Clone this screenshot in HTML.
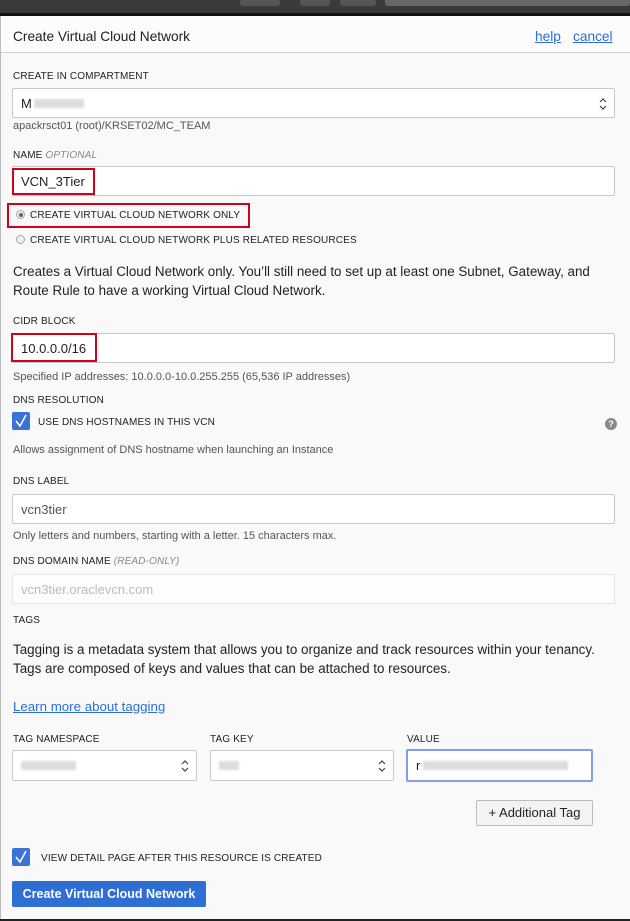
<!DOCTYPE html>
<html><head><meta charset="utf-8"><style>
*{box-sizing:border-box;margin:0;padding:0}
body{width:630px;height:921px;background:#f9f9f9;font-family:"Liberation Sans",sans-serif;color:#222;position:relative;overflow:hidden}
.a{position:absolute}
.lbl{position:absolute;left:13px;font-size:10px;letter-spacing:.15px;color:#222}
.lbl i{color:#888}
.help{position:absolute;left:13px;font-size:11px;color:#555}
.inp{position:absolute;background:#fff;border:1px solid #c8c8c8;border-radius:2px;font-size:13px;padding-left:8px;display:flex;align-items:center}
.red{position:absolute;border:2px solid #d0021b}
.p{position:absolute;left:13px;font-size:13.4px;line-height:19px;color:#222}
.arr{position:absolute;right:6px;top:8px}
.blur{display:inline-block;height:9px;background:#ddd;filter:blur(1px)}
.cb{position:absolute;width:18px;height:18px;background:#3a72d6;border-radius:2px}
</style></head><body>
<div class="a" style="left:0;top:0;width:630px;height:13px;background:#3a3a3a"></div>
<div class="a" style="left:240px;top:0;width:40px;height:6px;background:#555;border-radius:0 0 3px 3px"></div>
<div class="a" style="left:300px;top:0;width:30px;height:6px;background:#555;border-radius:0 0 3px 3px"></div>
<div class="a" style="left:340px;top:0;width:36px;height:6px;background:#555;border-radius:0 0 3px 3px"></div>
<div class="a" style="left:385px;top:0;width:245px;height:6px;background:#666;border-radius:0 0 3px 3px"></div>
<div class="a" style="left:0;top:13px;width:630px;height:3px;background:#111"></div>
<div class="a" style="left:0;top:16px;width:630px;height:37px;background:#fcfcfc;border-bottom:1px solid #ccd"></div>
<div class="a" style="left:0;top:16px;width:1px;height:905px;background:#bbb"></div>
<div class="a" style="left:13px;top:29px;font-size:13.7px;color:#222">Create Virtual Cloud Network</div>
<div class="a" style="left:535px;top:29px;font-size:13.7px;color:#2a6fd6;text-decoration:underline">help</div>
<div class="a" style="left:573px;top:29px;font-size:13.7px;color:#2a6fd6;text-decoration:underline">cancel</div>

<div class="lbl" style="top:71px">CREATE IN COMPARTMENT</div>
<div class="inp" style="left:12px;top:88px;width:603px;height:30px">M<span class="blur" style="width:50px;margin-left:2px"></span>
<svg class="arr" width="10" height="14" viewBox="0 0 10 14"><path d="M2 5l3-3 3 3M2 9l3 3 3-3" fill="none" stroke="#444" stroke-width="1.2"/></svg></div>
<div class="help" style="top:120px">apackrsct01 (root)/KRSET02/MC_TEAM</div>

<div class="lbl" style="top:150px">NAME <i>OPTIONAL</i></div>
<div class="inp" style="left:12px;top:166px;width:603px;height:30px">VCN_3Tier</div>
<div class="red" style="left:12px;top:168px;width:83px;height:27px"></div>

<div class="a" style="left:16px;top:210px;width:9px;height:9px;border-radius:50%;border:1px solid #aaa;background:#eee"><div style="width:4px;height:4px;margin:1.5px;border-radius:50%;background:#666"></div></div>
<div class="lbl" style="left:30px;top:210px">CREATE VIRTUAL CLOUD NETWORK ONLY</div>
<div class="red" style="left:7px;top:203px;width:243px;height:25px"></div>
<div class="a" style="left:16px;top:235px;width:9px;height:9px;border-radius:50%;border:1px solid #aaa;background:#eee"></div>
<div class="lbl" style="left:30px;top:235px">CREATE VIRTUAL CLOUD NETWORK PLUS RELATED RESOURCES</div>

<div class="p" style="top:262px">Creates a Virtual Cloud Network only. You’ll still need to set up at least one Subnet, Gateway, and<br>Route Rule to have a working Virtual Cloud Network.</div>

<div class="lbl" style="top:316px">CIDR BLOCK</div>
<div class="inp" style="left:12px;top:333px;width:603px;height:30px">10.0.0.0/16</div>
<div class="red" style="left:11px;top:333px;width:86px;height:29px"></div>
<div class="help" style="top:371px">Specified IP addresses: 10.0.0.0-10.0.255.255 (65,536 IP addresses)</div>

<div class="lbl" style="top:395px">DNS RESOLUTION</div>
<div class="cb" style="left:12px;top:412px"><svg width="18" height="18"><path d="M4 9l4 5 6-11" fill="none" stroke="#fff" stroke-width="1.5"/></svg></div>
<div class="lbl" style="left:38px;top:417px">USE DNS HOSTNAMES IN THIS VCN</div>
<div class="a" style="left:605px;top:418px;width:12px;height:12px;border-radius:50%;background:#888;color:#fff;font-size:9px;font-weight:bold;text-align:center;line-height:12px">?</div>
<div class="help" style="top:444px">Allows assignment of DNS hostname when launching an Instance</div>

<div class="lbl" style="top:476px">DNS LABEL</div>
<div class="inp" style="left:12px;top:494px;width:603px;height:30px;color:#555">vcn3tier</div>
<div class="help" style="top:530px">Only letters and numbers, starting with a letter. 15 characters max.</div>

<div class="lbl" style="top:556px">DNS DOMAIN NAME <i>(READ-ONLY)</i></div>
<div class="inp" style="left:12px;top:574px;width:603px;height:30px;color:#bbb;border-color:#e4e4e4;background:#fdfdfd">vcn3tier.oraclevcn.com</div>

<div class="lbl" style="top:615px">TAGS</div>
<div class="p" style="top:640px">Tagging is a metadata system that allows you to organize and track resources within your tenancy.<br>Tags are composed of keys and values that can be attached to resources.</div>
<div class="a" style="left:13px;top:699px;font-size:13.3px;color:#2a6fd6;text-decoration:underline">Learn more about tagging</div>

<div class="lbl" style="top:734px">TAG NAMESPACE</div>
<div class="lbl" style="left:210px;top:734px">TAG KEY</div>
<div class="lbl" style="left:407px;top:734px">VALUE</div>
<div class="inp" style="left:12px;top:750px;width:185px;height:31px"><span class="blur" style="width:55px"></span>
<svg class="arr" width="10" height="14" viewBox="0 0 10 14"><path d="M2 5l3-3 3 3M2 9l3 3 3-3" fill="none" stroke="#444" stroke-width="1.2"/></svg></div>
<div class="inp" style="left:210px;top:750px;width:184px;height:31px"><span class="blur" style="width:20px"></span>
<svg class="arr" width="10" height="14" viewBox="0 0 10 14"><path d="M2 5l3-3 3 3M2 9l3 3 3-3" fill="none" stroke="#444" stroke-width="1.2"/></svg></div>
<div class="inp" style="left:406px;top:749px;width:187px;height:33px;border:2px solid #7f9ef0">r<span class="blur" style="width:145px;margin-left:3px"></span></div>

<div class="a" style="left:476px;top:800px;width:117px;height:26px;border:1px solid #bbb;border-radius:2px;background:#f3f3f3;font-size:13px;text-align:center;line-height:24px">+ Additional Tag</div>

<div class="cb" style="left:12px;top:848px"><svg width="18" height="18"><path d="M4 9l4 5 6-11" fill="none" stroke="#fff" stroke-width="1.5"/></svg></div>
<div class="lbl" style="left:41px;top:853px">VIEW DETAIL PAGE AFTER THIS RESOURCE IS CREATED</div>

<div class="a" style="left:12px;top:881px;width:194px;height:26px;background:#2f6fd4;border-radius:2px;color:#fff;font-size:12.5px;font-weight:bold;text-align:center;line-height:26px">Create Virtual Cloud Network</div>
<div class="a" style="left:0;top:919px;width:630px;height:2px;background:#222"></div>
</body></html>
